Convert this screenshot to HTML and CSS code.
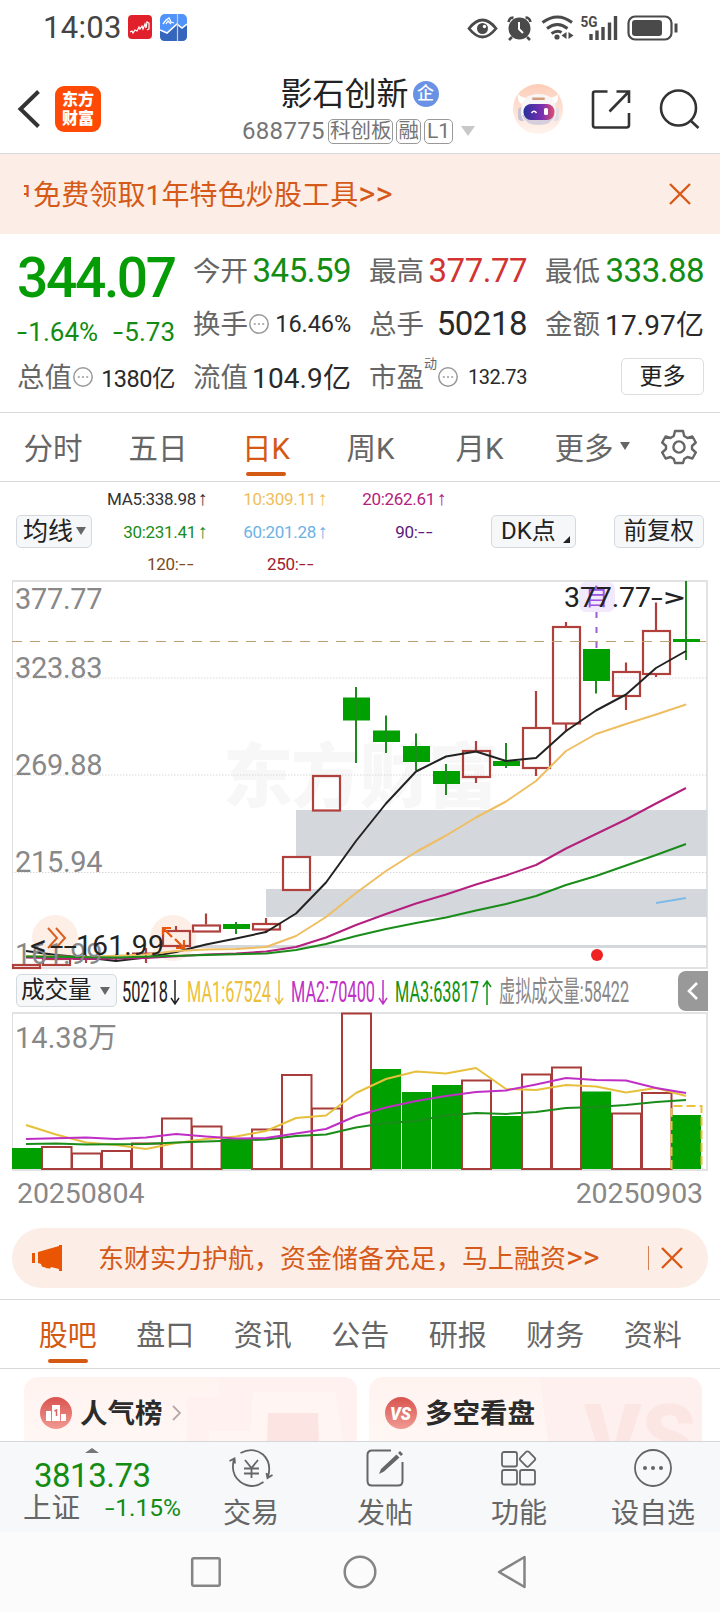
FILE: index.html
```html
<!DOCTYPE html>
<html lang="zh-CN">
<head>
<meta charset="utf-8">
<title>影石创新 688775</title>
<link rel="stylesheet" href="styles.css">
</head>
<body>
<div class="screen">
  <div class="status">
    <span class="clock">14:03</span>
    <svg class="app-red" width="24" height="24" viewBox="0 0 24 24"><rect width="24" height="24" rx="4" fill="#e0202a"/><path d="M2 17l2-1 1 2 2-3 2 1 2-4 1 2 2-3 1 3 2-5 1 4 1-6 2 1v6l-2 1" fill="none" stroke="#fff" stroke-width="1.2"/></svg>
    <svg class="app-blue" width="27" height="27" viewBox="0 0 27 27"><rect width="27" height="27" rx="5" fill="#4f93fb"/><path d="M0 16l7 3 10-9 5 4 5-4v12q0 5-5 5H5q-5 0-5-5z" fill="#3566bd"/><path d="M0 16l7 3 10-9 5 4 5-4" fill="none" stroke="#fff" stroke-width="1.6"/><path d="M3 10l3-4 3-2 2 4 3 1M6 10l2-3 3 3" fill="none" stroke="#fff" stroke-width="1.3"/><path d="M17.500 0v27" stroke="#e8c9a0" stroke-width="1.2"/></svg>
    <svg class="status-icons" width="214" height="32" viewBox="466 10 214 32" fill="none" stroke="#4a4a4a">
      <path d="M470 27.500q13.500-17 27 0q-13.500 17-27 0z" stroke-width="2.800"/><circle cx="483.500" cy="27.500" r="5.500" fill="#4a4a4a" stroke="none"/><circle cx="485.500" cy="25.500" r="1.700" fill="#fff" stroke="none"/>
      <circle cx="520.500" cy="27.500" r="11" fill="#4a4a4a" stroke="none"/><path d="M509.500 21q1-4.500 5-4.500M531.500 21q-1-4.500-5-4.500M513 36l-3 3M528 36l3 3" stroke-width="2.600"/><path d="M520 21v7l4 4" stroke="#fff" stroke-width="2"/>
      <path d="M543.500 21.500q15-11 29.500 0M548 27.500q10.500-8 20.500 0M552.500 32.500q6-4 10-1" stroke-width="3"/><circle cx="558" cy="36" r="2.600" fill="#4a4a4a" stroke="none"/><path d="M567.500 31v7l-5-3.500zM569.500 31v7l5-3.500z" fill="#4a4a4a" stroke="none"/>
      <text class="net" x="581.500" y="26" textLength="17" lengthAdjust="spacingAndGlyphs">5G</text>
      <path d="M592 33v6M598 29.500v9.500M604 26v13M610.500 21.500v17.500M616.500 15v24" stroke-width="3.400"/>
      <rect x="629.500" y="15.500" width="43" height="23" rx="6.500" stroke-width="2.200"/><rect x="633" y="19" width="30" height="16" rx="3" fill="#4a4a4a" stroke="none"/><path d="M677 22.500v9" stroke-width="3"/>
    </svg>
  </div>

  <div class="header">
    <div class="head-left">
      <svg width="24" height="40" viewBox="0 0 24 40"><path d="M21.500 2.500L3.500 20l18 17.500" fill="none" stroke="#333" stroke-width="4"/></svg>
      <div class="logo"><span>东方</span><span>财富</span></div>
    </div>
    <div class="head-mid">
      <div class="stock-name">影石创新<span class="ent">企</span></div>
      <div class="stock-sub"><span class="code">688775</span><span class="tag">科创板</span><span class="tag">融</span><span class="tag">L1</span><i class="tri-sub"></i></div>
    </div>
    <div class="head-right">
      <svg width="52" height="52" viewBox="0 0 52 52">
        <defs><linearGradient id="rb" x1="0" y1="0" x2="0" y2="1"><stop offset="0" stop-color="#fdcdb8"/><stop offset="1" stop-color="#fff4ef"/></linearGradient><linearGradient id="rv" x1="0" y1="0" x2="1" y2="0"><stop offset="0" stop-color="#27309c"/><stop offset=".6" stop-color="#7a2fb0"/><stop offset="1" stop-color="#e0506a"/></linearGradient></defs>
        <circle cx="26" cy="26" r="25" fill="url(#rb)"/>
        <path d="M6 11q-1 8 4 10l7-6q-8 0-11-4zM46 11q1 8-4 10l-7-6q8 0 11-4z" fill="#fff"/>
        <rect x="6" y="24" width="8" height="14" rx="4" fill="#c9c3d4"/><rect x="40" y="24" width="7" height="14" rx="3.500" fill="#e4dde4"/>
        <path d="M9 29Q9 11 26.500 11T44 29Q44 42 26.500 42T9 29z" fill="#f8f5f6"/><path d="M10 32q3 10 16.500 10T43 32z" fill="#d6cedb"/>
        <rect x="20" y="14.500" width="13" height="2.500" rx="1.200" fill="#d59c7c"/>
        <rect x="11.500" y="21" width="31" height="16" rx="7.500" fill="url(#rv)"/>
        <path d="M19.500 30q2.500-3.500 5 0" fill="none" stroke="#fff" stroke-width="1.600"/><rect x="32" y="25" width="4" height="7" rx="1.500" fill="#fff"/>
      </svg>
      <svg width="42" height="42" viewBox="0 0 42 42" fill="none" stroke="#333" stroke-width="2.600"><path d="M17.500 3.500H5q-2 0-2 2V37q0 2.500 2 2.500H36.500q2.500 0 2.500-2.500V25M19.500 23.500L38.500 4M26.500 3.500H39V15"/></svg>
      <svg width="42" height="42" viewBox="0 0 42 42" fill="none" stroke="#333" stroke-width="2.600"><circle cx="20.500" cy="20" r="17.500"/><path d="M32 32l8.500 8"/></svg>
    </div>
  </div>

  <div class="banner">
    <div class="marquee"><span>户免费领取1年特色炒股工具<b>&gt;&gt;</b></span></div>
    <svg width="24" height="24" viewBox="0 0 24 24"><path d="M2 2l20 20M22 2L2 22" stroke="#db5a18" stroke-width="2.400"/></svg>
  </div>

  <div class="quote">
    <div class="price-box"><div class="price">344.07</div><div class="change"><span><s>-</s>1.64%</span><span><s>-</s>5.73</span></div></div>
    <div class="cell"><label>今开</label><b class="v33 green">345.59</b></div>
    <div class="cell"><label>最高</label><b class="v33 red">377.77</b></div>
    <div class="cell"><label>最低</label><b class="v33 green">333.88</b></div>
    <div class="cell"><label>换手</label><svg class="dots" width="20" height="20" viewBox="0 0 20 20"><circle cx="10" cy="10" r="9.200"/><path d="M4.800 10h2M9 10h2M13.200 10h2"/></svg><b class="v23">16.46%</b></div>
    <div class="cell"><label>总手</label><b class="v33">50218</b></div>
    <div class="cell"><label>金额</label><b class="v28 wide">17.97亿</b></div>
    <div class="cell"><label>总值</label><svg class="dots" width="20" height="20" viewBox="0 0 20 20"><circle cx="10" cy="10" r="9.200"/><path d="M4.800 10h2M9 10h2M13.200 10h2"/></svg><b class="v23 tight">1380亿</b></div>
    <div class="cell"><label>流值</label><b class="v28 wide">104.9亿</b></div>
    <div class="cell"><label>市盈</label><sup>动</sup><svg class="dots" width="20" height="20" viewBox="0 0 20 20"><circle cx="10" cy="10" r="9.200"/><path d="M4.800 10h2M9 10h2M13.200 10h2"/></svg><b class="v20">132.73</b></div>
    <div class="cell end"><span class="more-btn">更多</span></div>
  </div>

  <div class="periods">
    <span>分时</span><span>五日</span><span class="on">日K</span><span>周K</span><span>月K</span><span>更多<i class="tri"></i></span>
    <svg width="36" height="36" viewBox="0 0 36 36" fill="none" stroke="#666" stroke-width="2.400" stroke-linejoin="round"><path d="M14 2h8l1.200 5 3.300 2 4.900-1.500 3.400 6-3.800 3.500v3l3.800 3.500-3.400 6L26.500 28l-3.300 2L22 34h-8l-1.200-4-3.300-2-4.900 1.500-3.400-6L5 20v-3l-3.800-3.500 3.400-6L9.500 9l3.300-2z"/><circle cx="18" cy="18" r="5.600"/></svg>
  </div>

  <div class="ma">
    <span class="btn">均线<i class="tri big"></i></span>
    <div class="ma-grid">
      <span class="m5">MA5:338.98<u>↑</u></span><span class="m10">10:309.11<u>↑</u></span><span class="m20">20:262.61<u>↑</u></span>
      <span class="m30">30:231.41<u>↑</u></span><span class="m60">60:201.28<u>↑</u></span><span class="m90">90:<s>--</s><u></u></span>
      <span class="m120">120:<s>--</s><u></u></span><span class="m250">250:<s>--</s><u></u></span>
    </div>
    <span class="btn dk">DK点<i class="corner"></i></span>
    <span class="btn">前复权</span>
  </div>

  <svg class="kline" width="720" height="390" viewBox="0 580 720 390" fill="none">
    <text class="watermark" x="223" y="802" textLength="275">东方财富</text>
    <path d="M12.500 968V581.500" stroke="#dedede"/><path d="M12 581H707V968H12" stroke="#e2e2e2" stroke-width="2"/>
    <path d="M12 678H707M12 775H707M12 872.500H707" stroke="#d8d8d8" stroke-dasharray="1.500 1.500"/>
    <path fill="#d4d7dc" d="M296 810H707V856H296zM266 889H707V917H266zM176 945H707V948H176z"/>
    <g fill="#fdeee6"><circle cx="55" cy="938" r="23"/><circle cx="173" cy="938" r="23"/></g>
    <rect x="579" y="582" width="36" height="30" rx="7" fill="#f2e9fd"/><text class="zi" x="585" y="605">自</text>
    <path d="M596.500 612V649" stroke="#9b5fd0" stroke-width="2" stroke-dasharray="6 9"/>
    <g stroke="#b0403c" stroke-width="2.200">
      <rect x="13" y="965" width="27" height="3"/><rect x="43" y="959" width="27" height="6"/><path d="M73 959h27M86 955v8M103 958h27M116 954v8M132 953.500h28M146 948v15"/>
      <rect x="163" y="931" width="27" height="15"/><path d="M176 926v5"/>
      <rect x="193" y="925.500" width="27" height="6"/><path d="M206 913.500v11"/>
      <rect x="253" y="924" width="27" height="5.500"/><path d="M266 918v6M266 930v3"/>
      <rect x="283" y="857" width="27" height="33"/><rect x="313" y="776" width="27" height="34.500"/>
      <rect x="463" y="751" width="27" height="26"/><path d="M476 741v10M476 777v6"/>
      <rect x="523" y="728" width="27" height="40"/><path d="M536 691v37M536 768v8"/>
      <rect x="553" y="627" width="27" height="96.500"/><path d="M566 622v5M566 724v7.500"/>
      <rect x="613" y="672" width="27" height="24"/><path d="M626 662.500v9.500M626 696v14"/>
      <rect x="643" y="631" width="27" height="43"/><path d="M656 602.500v28M656 674v3"/>
    </g>
    <path d="M12 641.500H707" stroke="#c0a070" stroke-dasharray="10 8"/>
    <path fill="#00a000" d="M223 924h27v5h-27zM343 697.500h27v23h-27zM373 730.500h27v11.500h-27zM403 746h27v16h-27zM433 771h27v13h-27zM493 761h27v5h-27zM583 649h27v32h-27zM673 639h27v3h-27z"/>
    <path stroke="#1f8a1f" stroke-width="2" d="M236 922v12M356 687v76M386 715.500v37.500M416 733.500v37M446 764v31M506 743v25M596 681v12.500M686 581v79"/>
    <g stroke-width="2" stroke-linejoin="round">
      <path stroke="#222" d="M26 951L56 955 86 957.500 116 961 146 957.500 176 952 206 944.500 236 938.500 266 932 296 913.500 326 882.500 356 841 386 803.500 416 771.500 446 756.500 476 751.500 506 761 536 758 566 731 596 710.500 626 694.500 656 668 686 651"/>
      <path stroke="#efbe62" d="M26 956L86 957 146 954.500 176 951 206 949.500 236 949 266 947 296 936 326 917 356 893 386 871 416 852 446 835.500 476 817.500 506 801.500 536 781 566 751 596 734 626 724 656 714.500 686 704.500"/>
      <path stroke="#b4207e" d="M26 957.500L86 959 146 958 206 954.500 236 953.500 266 951.500 296 947 326 937.500 356 925 386 914 416 903.500 446 894.500 476 884.500 506 875.500 536 865 566 848.500 596 834 626 819.500 656 803.500 686 788"/>
      <path stroke="#1a8c1a" d="M26 956.500L116 957.500 206 955 266 953.500 296 950 326 944 356 936 386 929 416 923 446 917.500 476 910.500 506 904 536 896 566 885 596 876 626 865.500 656 855 686 844"/>
      <path stroke="#7fb9e8" d="M656 903L686 898"/>
    </g>
    <g class="axis"><text x="15" y="608.500">377.77</text><text x="15" y="678">323.83</text><text x="15" y="775">269.88</text><text x="15" y="872">215.94</text><text x="15" y="964">161.99</text></g>
    <path d="M48 928l9 10-9 10M56 928l9 10-9 10" stroke="#d9601f" stroke-width="2"/>
    <path d="M163 935v-7h8M163 928l9 9M176 948h8v-8M184 948l-9-9" stroke="#e8590c" stroke-width="2.200"/>
    <g class="mark"><text x="564" y="607" textLength="87">377.77</text><text x="651" y="607" textLength="34" lengthAdjust="spacingAndGlyphs">-&gt;</text><text x="30" y="955" textLength="17" lengthAdjust="spacingAndGlyphs">&lt;</text><text x="50" y="955" textLength="27" lengthAdjust="spacingAndGlyphs">--</text><text x="76" y="955" textLength="88">161.99</text></g>
    <circle cx="597" cy="955" r="6" fill="#ee2222"/>
  </svg>

  <div class="vol-head">
    <span class="btn vol-btn">成交量<i class="tri big"></i></span>
    <svg class="vol-legend" width="530" height="40" viewBox="120 970 530 40">
      <text x="122" y="1001" fill="#222" textLength="46" lengthAdjust="spacingAndGlyphs">50218</text>
      <text x="187" y="1001" fill="#ebc03a" textLength="84" lengthAdjust="spacingAndGlyphs">MA1:67524</text>
      <text x="291" y="1001" fill="#c02fc5" textLength="84" lengthAdjust="spacingAndGlyphs">MA2:70400</text>
      <text x="395" y="1001" fill="#129212" textLength="84" lengthAdjust="spacingAndGlyphs">MA3:63817</text>
      <text x="499" y="1001" fill="#888" textLength="130" lengthAdjust="spacingAndGlyphs">虚拟成交量:58422</text>
      <g fill="none" stroke-width="1.500"><path stroke="#222" d="M175 979v24M171 997l4 6 4-6"/><path stroke="#ebc03a" d="M279 979v24M275 997l4 6 4-6"/><path stroke="#c02fc5" d="M383 979v24M379 997l4 6 4-6"/><path stroke="#129212" d="M487 1004v-24M483 986l4-6 4 6"/></g>
    </svg>
    <span class="collapse"><svg width="14" height="20" viewBox="0 0 14 20"><path d="M11 2L3 10l8 8" fill="none" stroke="#fff" stroke-width="2.600"/></svg></span>
  </div>

  <svg class="volume" width="720" height="160" viewBox="0 1011 720 160" fill="none">
    <path d="M12.500 1170V1013" stroke="#dedede"/><path d="M12 1013H707V1170H12" stroke="#e2e2e2" stroke-width="2"/>
    <g stroke="#a83c3a" stroke-width="2">
      <path d="M42 1147h29.500v22h-29.500zM72 1153.500h29v15.500h-29zM102 1151h29v18h-29zM132 1143.500h29v25.500h-29zM162 1118.500h29.500v50.500h-29.500zM192 1126.500h29.500v42.500h-29.500zM252 1129.500h29v39.500h-29zM282 1075h29.500v94h-29.500zM312 1108.500h29v60.500h-29zM342 1013.500h29v155.500h-29zM462 1080.500h29v88.500h-29zM522 1074.500h29v94.500h-29zM552 1067.500h29v101.500h-29zM612 1113.500h29v55.500h-29zM642 1093h29.500v76h-29.500z"/>
    </g>
    <path fill="#00a000" d="M12 1148h29v21h-29zM222 1139h29v30h-29zM372 1069h29v100h-29zM402 1092h29v77h-29zM432 1085h29v84h-29zM492 1116h29v53h-29zM582 1091.500h29v77.500h-29zM672 1115h29v54h-29z"/>
    <path d="M671.500 1169V1106H701.500V1169" stroke="#ebc03a" stroke-width="2" stroke-dasharray="9 4"/>
    <g stroke-width="2" stroke-linejoin="round">
      <path stroke="#e6c03c" d="M26 1125L56 1134.500 86 1142.500 116 1145 146 1149 176 1143 206 1139 236 1136.500 266 1131 296 1118 326 1115.500 356 1093 386 1079 416 1071.500 446 1073.500 476 1068 506 1089 536 1090 566 1085 596 1086.500 626 1092.500 656 1088 686 1096"/>
      <path stroke="#1a8c1a" d="M26 1144L56 1143.500 86 1144.500 146 1144 176 1142.500 206 1141.500 266 1139.500 296 1136 326 1134.500 356 1127.500 386 1123 416 1121 446 1115.500 476 1113 506 1114 536 1112 566 1108 596 1107 626 1105 656 1102 686 1100"/>
      <path stroke="#c02fc5" d="M26 1139L86 1137.500 116 1139 146 1137.500 176 1134 206 1136.500 236 1138.500 266 1138 296 1133.500 326 1129 356 1116 386 1107.500 416 1101 446 1096 476 1092 506 1090.500 536 1084.500 566 1078 596 1080 626 1080.500 656 1088 686 1093"/>
    </g>
    <text class="vol-max" x="15" y="1048" textLength="102">14.38万</text>
  </svg>
  <div class="dates"><span>20250804</span><span>20250903</span></div>

  <div class="promo">
    <svg width="32" height="28" viewBox="0 0 32 28" fill="#ea5504"><path d="M1 9h3v10H1zM7 8l21-6V1h3v26h-3v-2l-8-2q-1 3-3 1-2 1-3-1-3 1-4-3l-3-1z"/></svg>
    <span class="promo-text">东财实力护航，资金储备充足，马上融资<b>&gt;&gt;</b></span>
    <i class="sep"></i>
    <svg width="24" height="24" viewBox="0 0 24 24"><path d="M2 2l20 20M22 2L2 22" stroke="#db5a18" stroke-width="2.400"/></svg>
  </div>

  <div class="tabs"><span class="on">股吧</span><span>盘口</span><span>资讯</span><span>公告</span><span>研报</span><span>财务</span><span>资料</span></div>

  <div class="cards">
    <div class="card">
      <svg class="deco" width="200" height="64" viewBox="0 0 200 64"><path d="M62 0h138v64H30V20h32z" fill="#fef1ef"/><path d="M96 15h82l8 49H52V54h42z" fill="#fff6f3"/><path d="M111 36h50l1 28h-52z" fill="#fce4e2"/></svg>
      <svg class="ico" width="32" height="32" viewBox="0 0 32 32"><defs><linearGradient id="cg" x1="0" y1="0" x2="0" y2="1"><stop offset="0" stop-color="#d9534f"/><stop offset="1" stop-color="#f09a92"/></linearGradient></defs><circle cx="16" cy="16" r="16" fill="url(#cg)"/><path d="M6 14h5v10H6zM12 8h8v16h-8zM21 17h5v7h-5z" fill="#fff"/><path d="M14.500 14l2-1v6" fill="none" stroke="#d9655f" stroke-width="1.500"/></svg>
      <span>人气榜</span>
      <svg width="12" height="18" viewBox="0 0 12 18"><path d="M2 2l7 7-7 7" fill="none" stroke="#b5aaa8" stroke-width="1.800"/></svg>
    </div>
    <div class="card">
      <svg class="deco" width="200" height="64" viewBox="0 0 200 64"><path d="M38 0h162v64H46z" fill="#fdf0ee"/><text class="vs-bg" x="82" y="92" textLength="112" lengthAdjust="spacingAndGlyphs">VS</text></svg>
      <svg class="ico" width="32" height="32" viewBox="0 0 32 32"><circle cx="16" cy="16" r="16" fill="url(#cg)"/><text class="vs" x="5" y="23" textLength="21" lengthAdjust="spacingAndGlyphs">VS</text></svg>
      <span>多空看盘</span>
    </div>
  </div>

  <div class="bottom">
    <div class="index"><i class="up"></i><div class="idx">3813.73</div><div class="idx-row"><span>上证</span><b><s>-</s>1.15%</b></div></div>
    <div class="nav"><svg width="46" height="40" viewBox="0 0 46 40" fill="none" stroke="#666" stroke-width="1.800"><path d="M12.500 5Q25-1.500 35 6.500 44 15 40 29M35.500 34Q24 42 12.500 34 2 26 6 11M1.500 13l5-2.500.5 5M38.500 25l1 5 5-3"/><path d="M17 12l6.500 8 6.500-8M16 20.500h15M16 25.500h15M23.500 20v10"/></svg><span>交易</span></div>
    <div class="nav"><svg width="40" height="40" viewBox="0 0 40 40" fill="none" stroke="#666" stroke-width="2"><path d="M26 2.500H7Q2.500 2.500 2.500 7v26q0 4.500 4.500 4.500h26q4.500 0 4.500-4.500V14"/><path d="M14 26l2-5L31.500 6.500l3 3L19 23.500zM33 5l2-2 3 3-2 2z" fill="#666" stroke="none"/></svg><span>发帖</span></div>
    <div class="nav"><svg width="40" height="40" viewBox="0 0 40 40" fill="none" stroke="#666" stroke-width="1.800"><rect x="3" y="4" width="15" height="14.500" rx="2"/><rect x="3" y="22" width="15" height="14.500" rx="2"/><rect x="21" y="22" width="15" height="14.500" rx="2"/><rect x="22.500" y="5" width="12" height="12" rx="2" transform="rotate(45 28.500 11)"/></svg><span>功能</span></div>
    <div class="nav"><svg width="40" height="40" viewBox="0 0 40 40"><circle cx="20" cy="20" r="18" fill="none" stroke="#666" stroke-width="1.800"/><g fill="#666"><circle cx="12" cy="20" r="2"/><circle cx="20" cy="20" r="2"/><circle cx="28" cy="20" r="2"/></g></svg><span>设自选</span></div>
  </div>

  <div class="sysnav">
    <svg width="340" height="36" viewBox="190 1554 340 36" fill="none" stroke="#858585" stroke-width="2.500" stroke-linejoin="round"><rect x="192.200" y="1558.200" width="27.500" height="27.500" rx="1.500"/><circle cx="360" cy="1572" r="15.300"/><path d="M499 1572L524.500 1557V1587z"/></svg>
  </div>
</div>
</body>
</html>
```
FILE: styles.css
```css
* { box-sizing: border-box; }
body { margin: 0; background: #fff; font-family: Roboto, "Noto Sans CJK SC", sans-serif; color: #222; }
svg { display: block; flex: none; }
i, b, u, s { font-style: normal; font-weight: 400; text-decoration: none; }
s { display: inline-block; transform: scaleX(1.4); transform-origin: 0 50%; margin-right: .16em; }
.screen { width: 720px; height: 1612px; overflow: hidden; display: flex; flex-direction: column; background: #fff; }
.screen > * { flex: none; }

.status { height: 54px; display: flex; align-items: center; padding: 0 41px 0 43px; }
.clock { font-size: 31px; letter-spacing: .3px; color: #444; width: 78px; margin-right: 7px; white-space: nowrap; }
.app-red { margin-right: 8px; }
.status-icons { margin-left: auto; }
.net { font-size: 15px; font-weight: 700; fill: #4a4a4a; stroke: none; }

.header { height: 100px; border-bottom: 1px solid #d8dade; display: grid; grid-template-columns: 200px 1fr 200px; }
.head-left { display: flex; align-items: center; gap: 14px; padding: 10px 0 0 17px; }
.logo { width: 46px; height: 46px; border-radius: 9px; background: #ff4a05; color: #fff; font-weight: 900; font-size: 16px; line-height: 19px; display: flex; flex-direction: column; align-items: center; justify-content: center; }
.head-mid { display: flex; flex-direction: column; align-items: center; padding: 20px 3px 0 0; white-space: nowrap; }
.stock-name { font-size: 32px; line-height: 40px; height: 40px; display: flex; align-items: center; padding-left: 2px; }
.ent { width: 26px; height: 26px; border-radius: 13px; background: #6992e5; color: #fff; font-size: 17px; line-height: 25px; font-weight: 500; text-align: center; margin-left: 4px; }
.stock-sub { display: flex; align-items: center; gap: 3px; color: #757575; height: 34px; }
.code { font-size: 24px; letter-spacing: .35px; }
.tag { height: 25px; border: 1.500px solid #999; border-radius: 5px; font-size: 20.500px; line-height: 22px; padding: 0 1px; }
.tag:nth-child(4) { padding: 0 2px; font-size: 21px; }
.tri-sub { margin-left: 5px; border: 7px solid transparent; border-top: 10px solid #c8c8c8; border-bottom: 0; }
.head-right { display: flex; align-items: center; padding: 10px 20px 0 0; justify-content: flex-end; gap: 26px; }

.banner { height: 80px; background: #fceee6; display: flex; align-items: center; justify-content: space-between; padding: 0 28px 0 24px; }
.marquee { overflow: hidden; color: #d55a1a; font-size: 28px; line-height: 40px; height: 42px; letter-spacing: .12px; width: 420px; white-space: nowrap; margin-top: 6px; }
.marquee span { margin-left: -19px; }
.marquee b, .promo-text b { font-size: 1.17em; line-height: 1; }

.quote { height: 179px; border-bottom: 1px solid #d8d8d8; padding: 9px 0 0 17px; display: grid; grid-template-columns: 158px 158px 158px 159px; column-gap: 18px; grid-template-rows: 54px 53px 53px; }
.price-box { grid-row: 1 / 3; color: #069c06; padding-top: 7px; }
.price { font-size: 55px; font-weight: 500; letter-spacing: -2.300px; line-height: 56px; height: 57px; }
.change { display: flex; justify-content: space-between; font-size: 26px; line-height: 50px; height: 44px; color: #128c12; }
.cell { display: flex; align-items: center; white-space: nowrap; }
.cell label { font-size: 27.500px; color: #666; padding-bottom: 3px; }
.cell b { margin-left: auto; color: #2a2a2a; }
.cell .green { color: #128c12; }
.cell .red { color: #d23333; }
.v33 { font-size: 33px; letter-spacing: -.5px; }
.v28 { font-size: 28px; letter-spacing: -.2px; padding-bottom: 2px; }
.v23 { font-size: 23.500px; letter-spacing: -.1px; }
.tight { letter-spacing: -.5px; }
.v20 { font-size: 20px; letter-spacing: -.4px; }
.wide { letter-spacing: .1px; }
.cell sup { font-size: 13px; color: #666; align-self: flex-start; line-height: 28px; }
.dots { margin-left: 1px; fill: none; stroke: #999; stroke-width: 1.500px; }
.cell.end { justify-content: flex-end; }
.more-btn { width: 83px; height: 37px; border: 1px solid #ddd; border-radius: 5px; font-size: 23px; line-height: 35px; text-align: center; }

.periods { height: 69px; border-bottom: 1px solid #d8d8d8; display: grid; grid-template-columns: 106px 104px 112px 97px 121px 104px 70px; align-items: center; justify-items: center; font-size: 29.500px; color: #666; }
.periods span { display: flex; align-items: center; height: 68px; padding-bottom: 3px; }
.on { color: #d45a14; position: relative; }
.on::after { content: ""; position: absolute; left: 50%; margin-left: -20px; bottom: 5px; width: 40px; height: 4px; border-radius: 2px; background: #d45a14; }
.tri { border: 5px solid transparent; border-top: 8px solid #666; border-bottom: 0; margin-left: 6px; }

.ma { height: 98px; display: flex; align-items: center; padding: 0 16px; }
.btn { height: 33px; border: 1px solid #d4d9df; border-radius: 5px; background: #f6f7f9; font-size: 25px; line-height: 29px; padding: 0 5px 0 6px; display: flex; align-items: center; white-space: nowrap; }
.btn .tri { margin-left: 3px; }
.ma-grid { display: grid; grid-template-columns: 117px 120px 119px; grid-template-rows: repeat(3, 32.500px); align-items: center; justify-items: end; font-size: 17px; letter-spacing: -.3px; white-space: nowrap; }
.ma-grid span { padding-top: 1px; }
.ma-grid u { display: inline-block; width: 13px; text-align: center; font-family: "Liberation Sans", sans-serif; font-size: 20px; line-height: 18px; letter-spacing: 0; }
.ma-grid s { letter-spacing: 1px; margin-right: 6px; }
.m5 { color: #333; } .m10 { color: #f0bd5c; } .m20 { color: #b4207e; } .m30 { color: #1a8c1a; } .m60 { color: #6cb2e4; } .m90 { color: #5b1a78; } .m120 { color: #7d4a22; } .m250 { color: #a3202c; }
.ma .btn + .btn { font-size: 23.500px; margin-left: auto; padding: 0 9px; }
.ma .dk { margin-left: 43px; width: 85px; padding: 0 0 0 9px; font-size: 24px; gap: 7px; }
.corner { width: 0; height: 0; border-bottom: 7px solid #222; border-left: 7px solid transparent; align-self: flex-end; margin-bottom: 4px; }

.axis { font-size: 29px; fill: #888; letter-spacing: -.3px; }
.mark { font-size: 28.500px; fill: #222; }
.zi { font-size: 23px; fill: #9a55e0; }
.watermark { font-size: 70px; font-weight: 900; fill: #f7f7f7; }

.vol-head { height: 41px; display: flex; align-items: center; padding: 0 12px 0 16px; }
.vol-btn { width: 101px; font-size: 23.500px; padding: 0 6px 0 4px; justify-content: space-between; }
.vol-legend { margin-left: 3px; font-size: 29px; }
.collapse { margin-left: auto; width: 30px; height: 40px; background: #999; border-radius: 8px 0 0 8px; display: flex; align-items: center; justify-content: center; }
.vol-max { font-size: 29px; fill: #888; }
.dates { height: 57px; display: flex; justify-content: space-between; padding: 6px 17px 0 17px; font-size: 28.500px; letter-spacing: -.1px; line-height: 34px; color: #888; }

.promo { height: 60px; margin: 0 12px; border-radius: 30px; background: #fceee6; display: flex; align-items: center; padding: 0 24px 0 19px; color: #d55a1a; }
.promo-text { font-size: 26px; line-height: 40px; height: 40px; margin-left: 35px; margin-top: 2px; white-space: nowrap; }
.promo-text b { font-size: 1.24em; }
.sep { width: 1px; height: 24px; background: #d58050; margin-left: auto; margin-right: 11px; }

.tabs { margin-top: 11px; height: 70px; border-top: 1px solid #d8d8d8; border-bottom: 1px solid #d8d8d8; display: grid; grid-template-columns: repeat(7, 97.500px); padding-left: 19px; text-align: center; font-size: 29px; line-height: 72px; color: #666; }
.tabs span { height: 68px; }

.cards { height: 72px; padding: 8px 18px 0 24px; display: flex; gap: 12px; overflow: hidden; }
.card { position: relative; width: 333px; height: 90px; border-radius: 14px; background: linear-gradient(#fff3f0, #fff9f6); display: flex; align-items: center; padding: 0 0 18px 16px; font-size: 27.500px; font-weight: 700; color: #2b2b2b; overflow: hidden; }
.card > * { position: relative; }
.card .deco { position: absolute; right: 0; top: 0; }
.card span { margin: 1px 8px 0 8px; line-height: 40px; }
.vs { font-size: 19px; font-weight: 900; font-style: italic; fill: #fff; }
.vs-bg { font-size: 90px; font-weight: 900; fill: #fce6e4; }

.bottom { height: 91px; background: #f6f8fa; border-top: 1px solid #d5d7da; display: grid; grid-template-columns: 184px repeat(4, 134px); color: #666; }
.index { position: relative; padding: 15px 0 0 23px; }
.up { position: absolute; left: 85px; top: 6px; border: 7px solid transparent; border-bottom: 5px solid #777; border-top: 0; }
.idx { font-size: 33px; letter-spacing: -.5px; line-height: 38px; color: #128c12; padding-left: 11px; }
.idx-row { display: flex; align-items: center; justify-content: space-between; width: 158px; height: 28px; font-size: 28.500px; line-height: 28px; }
.idx-row b { font-size: 24.500px; color: #128c12; padding-bottom: 2px; }
.nav { display: flex; flex-direction: column; align-items: center; padding-top: 6px; font-size: 28px; line-height: 44px; }
.nav span { margin-top: 4px; }
.sysnav { height: 80px; background: #fbfbfb; display: flex; justify-content: center; padding-top: 22px; }
```
